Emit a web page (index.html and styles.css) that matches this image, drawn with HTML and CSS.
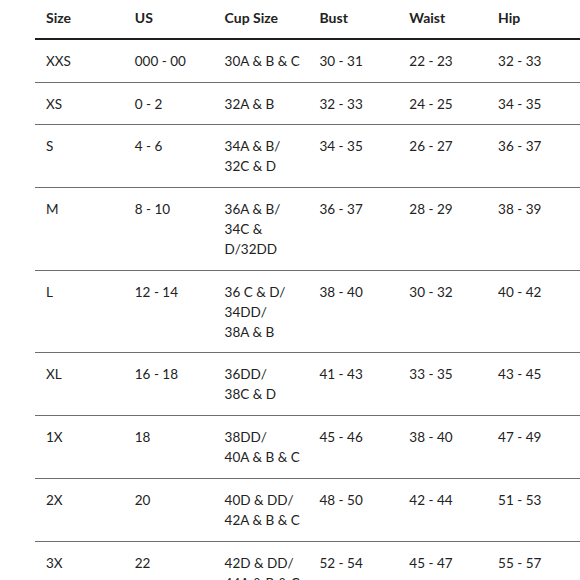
FILE: index.html
```html
<!DOCTYPE html>
<html>
<head>
<meta charset="utf-8">
<link rel="stylesheet" href="styles.css">
</head>
<body>
<table class="chart">
  <thead>
    <tr><th class="c1">Size</th><th class="c2">US</th><th class="c3">Cup Size</th><th class="c4">Bust</th><th class="c5">Waist</th><th class="c6">Hip</th></tr>
  </thead>
  <tbody>
    <tr><td>XXS</td><td>000 - 00</td><td>30A &amp; B &amp; C</td><td>30 - 31</td><td>22 - 23</td><td>32 - 33</td></tr>
    <tr><td>XS</td><td>0 - 2</td><td>32A &amp; B</td><td>32 - 33</td><td>24 - 25</td><td>34 - 35</td></tr>
    <tr><td>S</td><td>4 - 6</td><td>34A &amp; B/<br>32C &amp; D</td><td>34 - 35</td><td>26 - 27</td><td>36 - 37</td></tr>
    <tr><td>M</td><td>8 - 10</td><td>36A &amp; B/<br>34C &amp;<br>D/32DD</td><td>36 - 37</td><td>28 - 29</td><td>38 - 39</td></tr>
    <tr><td>L</td><td>12 - 14</td><td>36 C &amp; D/<br>34DD/<br>38A &amp; B</td><td>38 - 40</td><td>30 - 32</td><td>40 - 42</td></tr>
    <tr><td>XL</td><td>16 - 18</td><td>36DD/<br>38C &amp; D</td><td>41 - 43</td><td>33 - 35</td><td>43 - 45</td></tr>
    <tr><td>1X</td><td>18</td><td>38DD/<br>40A &amp; B &amp; C</td><td>45 - 46</td><td>38 - 40</td><td>47 - 49</td></tr>
    <tr><td>2X</td><td>20</td><td>40D &amp; DD/<br>42A &amp; B &amp; C</td><td>48 - 50</td><td>42 - 44</td><td>51 - 53</td></tr>
    <tr><td>3X</td><td>22</td><td>42D &amp; DD/<br>44A &amp; B &amp; C</td><td>52 - 54</td><td>45 - 47</td><td>55 - 57</td></tr>
  </tbody>
</table>
</body>
</html>
```
FILE: styles.css
```css
html, body {
  margin: 0;
  padding: 0;
  background: #fff;
  overflow: hidden;
}
body {
  width: 580px;
  height: 580px;
  padding-left: 35px;
  box-sizing: border-box;
  font-family: "Lato", "Open Sans", sans-serif;
  color: #222;
}
.chart {
  border-collapse: collapse;
  table-layout: fixed;
  width: 545px;
}
.chart th, .chart td {
  text-align: left;
  vertical-align: top;
  padding: 0 0 0 11px;
  font-size: 13.5px;
  line-height: 20px;
}
.chart th {
  font-size: 14px;
  font-weight: 700;
  padding-top: 8px;
  padding-bottom: 10px;
  border-bottom: 2px solid #1e1e1e;
}
.chart td {
  font-weight: 400;
  padding-top: 11px;
  padding-bottom: 10.7px;
  border-bottom: 1px solid #6e6e6e;
}
.c1 { width: 76px; }
.c2 { width: 77px; }
.c3 { width: 82px; }
.c4 { width: 77px; }
.c5 { width: 76px; }
.c6 { width: 80px; }
```
